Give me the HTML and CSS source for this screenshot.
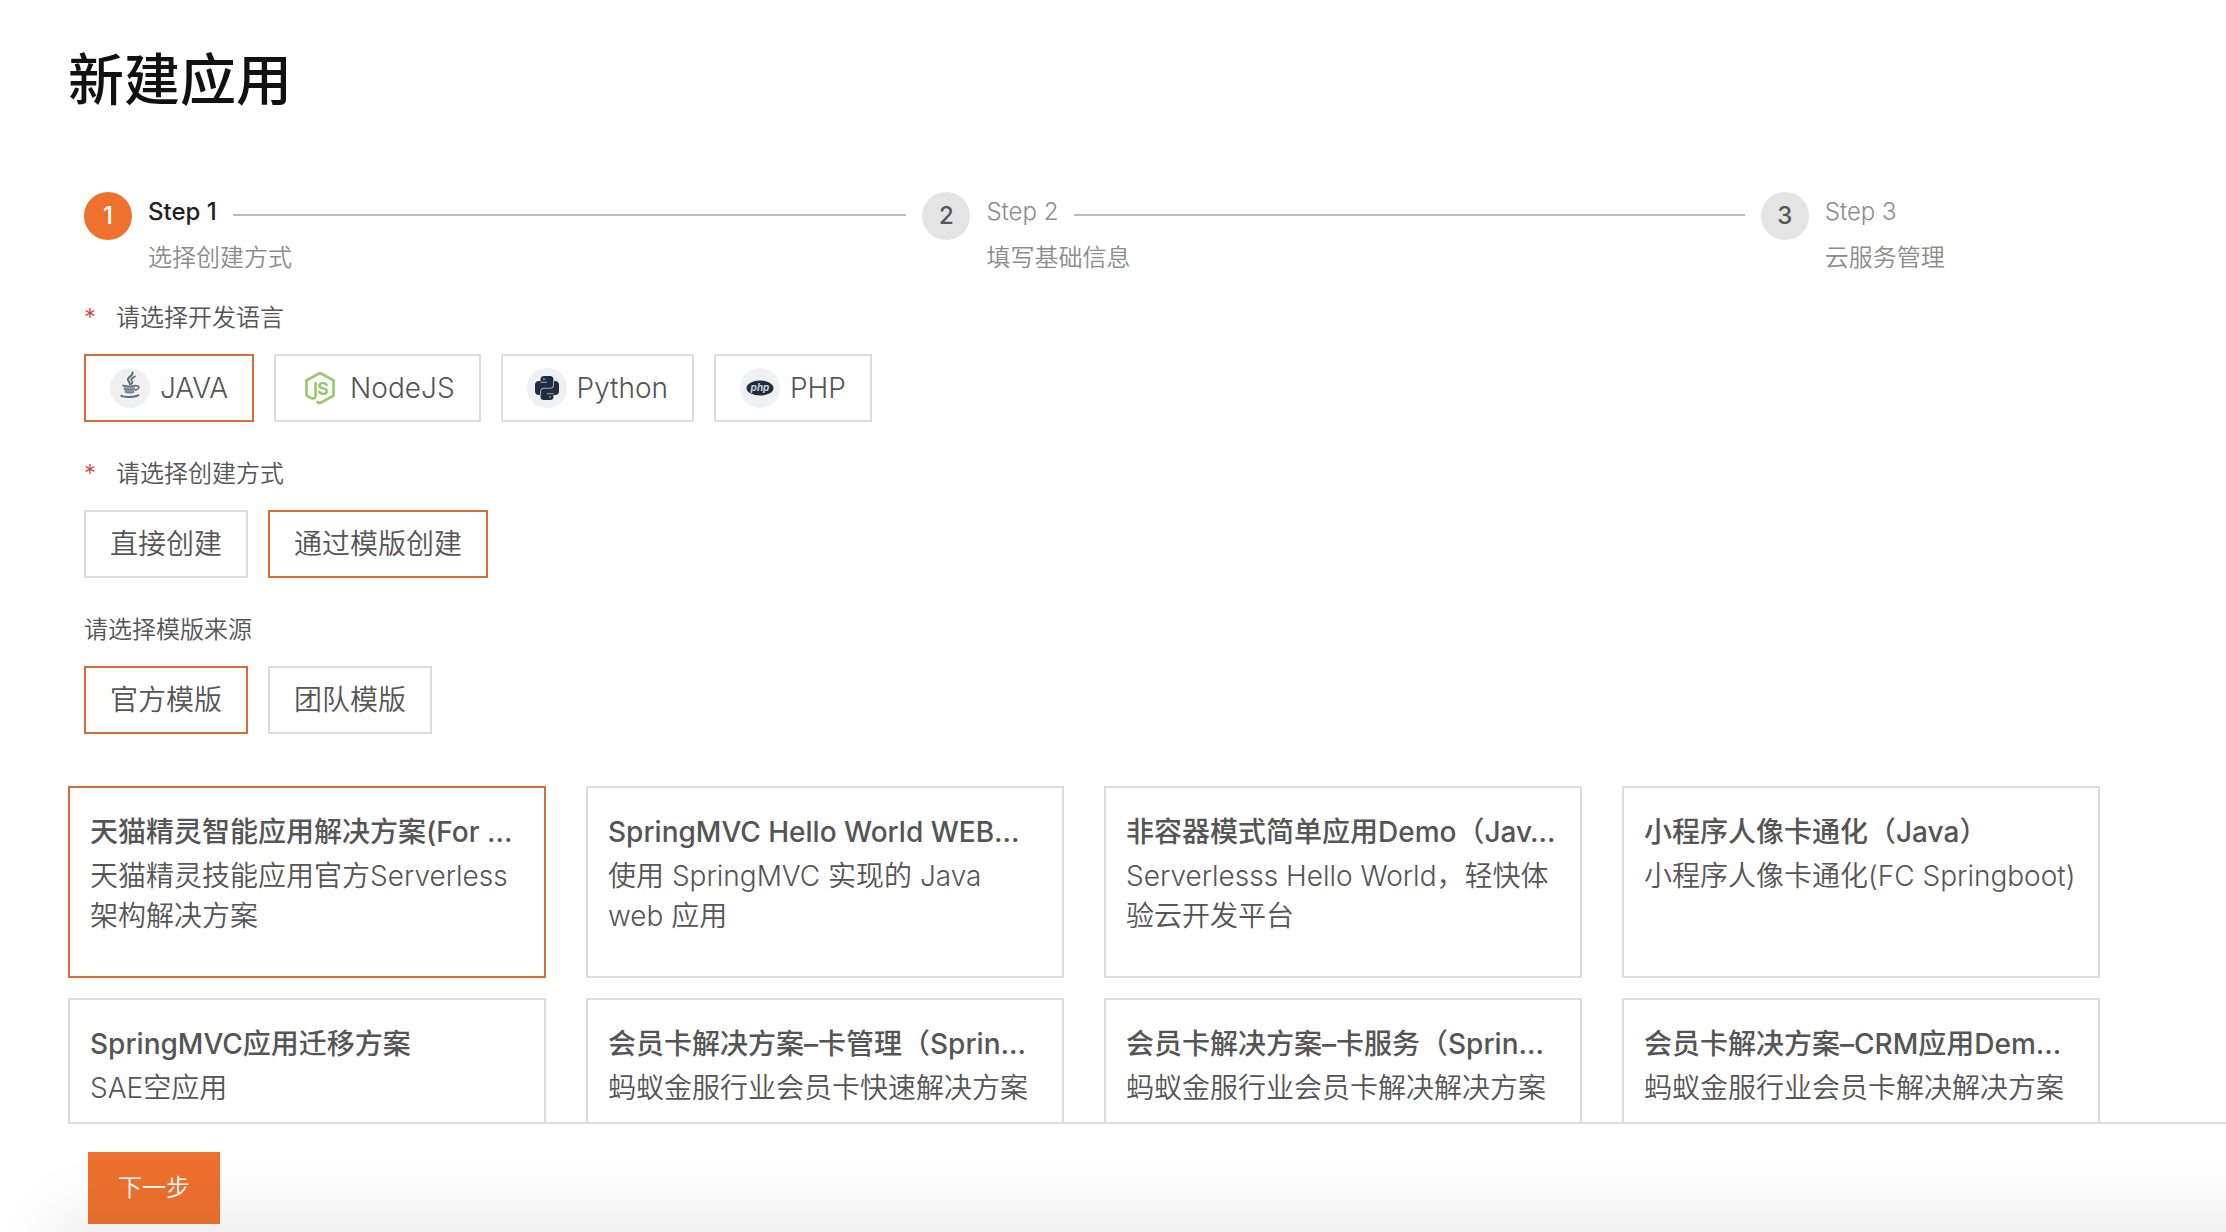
FILE: index.html
```html
<!DOCTYPE html>
<html lang="zh-CN">
<head>
<meta charset="utf-8">
<meta name="viewport" content="width=device-width, initial-scale=1">
<title>新建应用</title>
<link rel="stylesheet" href="styles.css">
</head>
<body>
<div class="shell">
  <main class="content">
    <h1 class="page-title">新建应用</h1>

    <ol class="steps">
      <li class="step step-current">
        <span class="step-dot">1</span>
        <div class="step-body">
          <div class="step-head"><span>Step 1</span></div>
          <div class="step-desc">选择创建方式</div>
        </div>
      </li>
      <li class="step">
        <span class="step-dot">2</span>
        <div class="step-body">
          <div class="step-head"><span>Step 2</span></div>
          <div class="step-desc">填写基础信息</div>
        </div>
      </li>
      <li class="step">
        <span class="step-dot">3</span>
        <div class="step-body">
          <div class="step-head"><span>Step 3</span></div>
          <div class="step-desc">云服务管理</div>
        </div>
      </li>
    </ol>

    <section class="field" aria-labelledby="label-lang">
      <div class="field-label"><span class="required">*</span><span id="label-lang">请选择开发语言</span></div>
      <div class="options">
        <button type="button" class="option selected" aria-pressed="true">
          <svg class="logo" viewBox="0 0 40 40" aria-hidden="true">
            <circle cx="20" cy="20" r="20" fill="#eef0f2"/>
            <g fill="none" stroke="#5d6a7a" stroke-linecap="round">
              <path d="M22.500 4.500c1.500 3-5.500 4.500-4.500 7.500.4 1.500 2 2 1.700 4" stroke-width="2"/>
              <path d="M25 8.500c-4 1.500-4.500 3-3 4.700.8 1 .3 2-.8 2.800" stroke-width="1.700"/>
              <path d="M13 17.500c3 1.300 9.500 1 12.500 0" stroke-width="1.700"/>
              <path d="M26 18c3.500-.8 4.500 2.500-.5 4.200" stroke-width="1.500"/>
              <path d="M14.500 21.200c3 .8 7 .8 10 0M15.500 24c3 .8 5.500.8 8 0" stroke-width="1.800"/>
              <path d="M11.500 27.500c-2 1.200 12 2.600 17-.3" stroke-width="2"/>
            </g>
            <path d="M13.500 18.500h11.500l-1.500 6.500h-8z" fill="#7b8796" opacity=".75"/>
          </svg>
          <span>JAVA</span>
        </button>
        <button type="button" class="option" aria-pressed="false">
          <svg class="logo" viewBox="0 0 40 40" aria-hidden="true">
            <path d="M17.500 34 20 35.200 33.500 27.600V12.400L20 5 6.500 12.400v15.200l4.300 2.300c2.600 1.300 4.700.4 4.700-2.200V15" fill="none" stroke="#97c96b" stroke-width="2.600" stroke-linejoin="round" stroke-linecap="round"/>
            <text x="17" y="27" font-size="18" font-weight="700" fill="#97c96b" font-family="Inter, sans-serif">S</text>
          </svg>
          <span>NodeJS</span>
        </button>
        <button type="button" class="option" aria-pressed="false">
          <svg class="logo" viewBox="0 0 40 40" aria-hidden="true">
            <circle cx="20" cy="20" r="20" fill="#eef0f2"/>
            <path d="M17 8h6q3.500 0 3.500 3.500V13h1.500q4 0 4 4v6q0 4-4 4h-1.500v1.500q0 3.500-3.500 3.500h-6q-3.500 0-3.500-3.500V27H12q-4 0-4-4v-6q0-4 4-4h1.500v-1.500q0-3.500 3.500-3.500z" fill="#1f2d3f"/>
            <path d="M13.500 14.300h6.500M26.500 25.700H20M13.500 27v-3q0-3.800 3.800-3.800h5.400q3.800 0 3.800-3.800V13" fill="none" stroke="#a4adb8" stroke-width="1.100"/>
            <circle cx="17" cy="11.200" r=".9" fill="#a4adb8"/>
            <circle cx="23" cy="28.800" r=".9" fill="#a4adb8"/>
          </svg>
          <span>Python</span>
        </button>
        <button type="button" class="option" aria-pressed="false">
          <svg class="logo" viewBox="0 0 40 40" aria-hidden="true">
            <circle cx="20" cy="20" r="20" fill="#eef0f2"/>
            <ellipse cx="20" cy="20" rx="13.500" ry="7.500" fill="#1f2d3f"/>
            <text x="20" y="22.800" text-anchor="middle" font-size="10" font-weight="700" font-style="italic" fill="#c9ced6" font-family="Inter, sans-serif">php</text>
          </svg>
          <span>PHP</span>
        </button>
      </div>
    </section>

    <section class="field" aria-labelledby="label-mode">
      <div class="field-label"><span class="required">*</span><span id="label-mode">请选择创建方式</span></div>
      <div class="options">
        <button type="button" class="option" aria-pressed="false">直接创建</button>
        <button type="button" class="option selected" aria-pressed="true">通过模版创建</button>
      </div>
    </section>

    <section class="field" aria-labelledby="label-source">
      <div class="field-label"><span id="label-source">请选择模版来源</span></div>
      <div class="options">
        <button type="button" class="option selected" aria-pressed="true">官方模版</button>
        <button type="button" class="option" aria-pressed="false">团队模版</button>
      </div>
    </section>

    <div class="cards">
      <button type="button" class="card selected" aria-pressed="true">
        <span class="card-title">天猫精灵智能应用解决方案(For …</span>
        <span class="card-desc">天猫精灵技能应用官方Serverless架构解决方案</span>
      </button>
      <button type="button" class="card" aria-pressed="false">
        <span class="card-title">SpringMVC Hello World WEB…</span>
        <span class="card-desc">使用 SpringMVC 实现的 Java web 应用</span>
      </button>
      <button type="button" class="card" aria-pressed="false">
        <span class="card-title">非容器模式简单应用Demo（Jav…</span>
        <span class="card-desc">Serverlesss Hello World，轻快体验云开发平台</span>
      </button>
      <button type="button" class="card" aria-pressed="false">
        <span class="card-title">小程序人像卡通化（Java）</span>
        <span class="card-desc">小程序人像卡通化(FC Springboot)</span>
      </button>
      <button type="button" class="card" aria-pressed="false">
        <span class="card-title">SpringMVC应用迁移方案</span>
        <span class="card-desc">SAE空应用</span>
      </button>
      <button type="button" class="card" aria-pressed="false">
        <span class="card-title">会员卡解决方案–卡管理（Sprin…</span>
        <span class="card-desc">蚂蚁金服行业会员卡快速解决方案</span>
      </button>
      <button type="button" class="card" aria-pressed="false">
        <span class="card-title">会员卡解决方案–卡服务（Sprin…</span>
        <span class="card-desc">蚂蚁金服行业会员卡解决解决方案</span>
      </button>
      <button type="button" class="card" aria-pressed="false">
        <span class="card-title">会员卡解决方案–CRM应用Dem…</span>
        <span class="card-desc">蚂蚁金服行业会员卡解决解决方案</span>
      </button>
    </div>
  </main>

  <footer class="footer">
    <button type="button" class="next">下一步</button>
  </footer>
</div>
</body>
</html>
```
FILE: styles.css
```css
* {
  box-sizing: border-box;
}

body {
  margin: 0;
  background: #fff;
  color: #555;
  font-family: Inter, "Noto Sans CJK SC", sans-serif;
  font-weight: 350;
  font-size: 28px;
  line-height: 40px;
}

button {
  font: inherit;
  color: inherit;
  cursor: pointer;
}

.shell {
  position: relative;
  display: flex;
  flex-direction: column;
  height: 100vh;
  padding-left: 68px;
}

.content {
  flex: 1;
  min-height: 0;
  overflow: hidden;
  padding-top: 40px;
}

.page-title {
  margin: 0 0 72px;
  color: #111;
  font-size: 56px;
  font-weight: 500;
  line-height: 80px;
}

/* Steps */
.steps {
  display: grid;
  grid-template-columns: 2fr 2fr 1fr;
  margin: 0 46px 0 16px;
  padding: 0;
  list-style: none;
  font-size: 24px;
  color: #8c8c8c;
}

.step {
  display: flex;
  gap: 16px;
}

.step-dot {
  flex: none;
  width: 48px;
  height: 48px;
  border-radius: 50%;
  background: #e4e4e4;
  color: #555;
  font-weight: 500;
  line-height: 48px;
  text-align: center;
}

.step-body {
  flex: 1;
}

.step-head {
  display: flex;
  align-items: center;
  gap: 16px;
  height: 46px;
  padding-right: 16px;
  line-height: 40px;
}

.step-head span {
  height: 46px;
}

.step:not(:last-child) .step-head::after {
  content: "";
  flex: 1;
  height: 2px;
  background: #bbb;
}

.step-desc {
  line-height: 40px;
}

.step-current .step-dot {
  background: #ee712e;
  color: #fff;
}

.step-current .step-head {
  color: #222;
  font-weight: 500;
}

/* Option groups */
.field {
  margin: 20px 0 0 16px;
}

.field + .field {
  margin-top: 32px;
}

.field-label {
  display: flex;
  gap: 20px;
  font-size: 24px;
}

.required {
  width: 12px;
  color: #d23c32;
}

.options {
  display: flex;
  flex-wrap: wrap;
  gap: 20px;
  margin-top: 16px;
}

.option {
  display: flex;
  align-items: center;
  gap: 10px;
  height: 68px;
  padding: 0 24px;
  border: 2px solid #ddd;
  background: #fff;
}

.option.selected,
.card.selected {
  border-color: #d76e38;
}

.logo {
  width: 40px;
  height: 40px;
}

/* Template cards */
.cards {
  display: grid;
  grid-template-columns: repeat(4, minmax(0, 1fr));
  gap: 20px 40px;
  margin: 52px 126px 20px 0;
}

.card {
  display: flex;
  flex-direction: column;
  gap: 4px;
  height: 192px;
  padding: 24px 20px;
  border: 2px solid #ddd;
  background: #fff;
  text-align: left;
}

.card-title {
  overflow: hidden;
  font-weight: 500;
  text-overflow: ellipsis;
  white-space: nowrap;
}

/* Footer */
.footer {
  padding: 28px 20px 8px;
  border-top: 2px solid #ddd;
}

.next {
  display: block;
  height: 72px;
  padding: 0 30px;
  border: 0;
  background: #ee712e;
  color: #fff;
  font-size: 24px;
}

/* Soft shade along the bottom edge of the window */
.shell::after {
  content: "";
  position: absolute;
  right: 0;
  bottom: 0;
  left: 0;
  height: 80px;
  background: linear-gradient(rgba(0, 0, 0, 0), rgba(0, 0, 0, 0.02) 50%, rgba(0, 0, 0, 0.06));
  -webkit-mask-image: linear-gradient(to right, transparent, #000 100px);
  mask-image: linear-gradient(to right, transparent, #000 100px);
  pointer-events: none;
}
```
